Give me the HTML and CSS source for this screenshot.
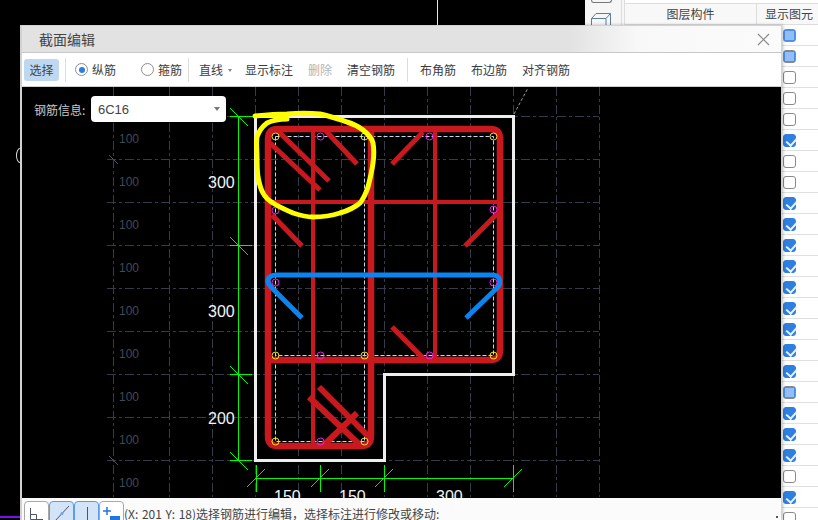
FILE: index.html
```html
<!DOCTYPE html>
<html lang="zh">
<head>
<meta charset="utf-8">
<title>截面编辑</title>
<link rel="stylesheet" href="styles.css">
</head>
<body>
<div class="desktop">
  <span class="bg-line"></span>
  <span class="bg-purple"></span>
  <span class="bg-arc"></span>

  <aside class="side">
    <div class="side-icons">
      <span class="side-stub"></span>
      <svg class="cube" width="22" height="26" viewBox="0 0 22 26"><path d="M1.5 7.5 L6 2.5 H20.5 V20 L16 25 H1.5 Z M1.5 7.5 H16 V25 M16 7.5 L20.5 2.5" /></svg>
    </div>
    <div class="side-table">
      <div class="thead"><span class="th-name">图层构件</span><span class="th-show">显示图元</span></div>
      <div class="row"><span class="cb part"></span></div>
      <div class="row"><span class="cb part"></span></div>
      <div class="row"><span class="cb"></span></div>
      <div class="row"><span class="cb"></span></div>
      <div class="row"><span class="cb"></span></div>
      <div class="row"><span class="cb on"></span></div>
      <div class="row"><span class="cb"></span></div>
      <div class="row"><span class="cb"></span></div>
      <div class="row"><span class="cb on"></span></div>
      <div class="row"><span class="cb on"></span></div>
      <div class="row"><span class="cb on"></span></div>
      <div class="row"><span class="cb on"></span></div>
      <div class="row"><span class="cb on"></span></div>
      <div class="row"><span class="cb on"></span></div>
      <div class="row"><span class="cb on"></span></div>
      <div class="row"><span class="cb on"></span></div>
      <div class="row"><span class="cb on"></span></div>
      <div class="row"><span class="cb part"></span></div>
      <div class="row"><span class="cb on"></span></div>
      <div class="row"><span class="cb on"></span></div>
      <div class="row"><span class="cb on"></span></div>
      <div class="row"><span class="cb"></span></div>
      <div class="row"><span class="cb on"></span></div>
      <div class="row"><span class="cb"></span></div>
    </div>
  </aside>

  <section class="dialog">
    <header class="title">
      <span class="title-text">截面编辑</span>
      <svg class="close" width="13" height="13" viewBox="0 0 13 13"><path d="M1 1 L12 12 M12 1 L1 12"/></svg>
    </header>

    <div class="toolbar">
      <button class="tool selected">选择</button>
      <span class="sep"></span>
      <span class="radio-item first"><span class="radio checked"></span>纵筋</span>
      <span class="radio-item second"><span class="radio"></span>箍筋</span>
      <span class="sep"></span>
      <span class="tool-drop">直线<span class="mini-caret"></span></span>
      <span class="tool-text">显示标注</span>
      <span class="tool-text off">删除</span>
      <span class="tool-text">清空钢筋</span>
      <span class="sep wide"></span>
      <span class="tool-text close-sep">布角筋</span>
      <span class="tool-text">布边筋</span>
      <span class="tool-text">对齐钢筋</span>
    </div>

    <div class="canvas">
      <svg class="drawing" width="759" height="411" viewBox="22 87 759 411">
        <path class="grid" d="M113.5 87V497 M169.5 87V497 M212.5 87V497 M255.5 87V497 M298.5 87V497 M341.5 87V497 M384.5 87V497 M427.5 87V497 M470.5 87V497 M513.5 87V497 M556.5 87V497 M599.5 87V497"/>
        <path class="grid" d="M107 116.5H599 M107 159.5H599 M107 202.5H599 M107 245.5H599 M107 288.5H599 M107 331.5H599 M107 374.5H599 M107 417.5H599 M107 460.5H599"/>
        <path class="grid-tick" d="M109 155L118 164 M109 456L118 465"/>
        <path class="stub" d="M514 114L528 88"/>
        <g class="hundreds">
          <text x="119" y="143">100</text><text x="119" y="186">100</text><text x="119" y="229">100</text>
          <text x="119" y="272">100</text><text x="119" y="315">100</text><text x="119" y="358">100</text>
          <text x="119" y="401">100</text><text x="119" y="444">100</text><text x="119" y="487">100</text>
        </g>

        <path class="outline" d="M255.5 116.5H513.5V374.5H384.5V460.5H255.5Z"/>

        <path class="dim" d="M238.5 116V460 M230 116.5H255 M230 245.5H252 M230 374.5H252 M230 460.5H252 M256.5 465V492 M320.5 465V492 M384.5 465V492 M513.5 465V492 M256 478.5H513"/>
        <path class="dim" d="M230 108L248 126 M230 237L248 255 M230 366L248 384 M230 452L248 470 M247 487L265 469 M311 487L329 469 M375 487L393 469 M504 487L522 469"/>
        <g class="dim-text">
          <text x="208" y="188">300</text><text x="208" y="317">300</text><text x="208" y="424">200</text>
          <text x="274" y="502">150</text><text x="339" y="502">150</text><text x="436" y="502">300</text>
        </g>

        <path class="guide" d="M275.5 136.5H493.5V355.5H275.5 M275.5 136.5V441.5H364.5 M364.5 136.5V441.5"/>

        <path class="rebar thin" d="M313 129V446 M435 129V360 M268 202H500"/>
        <path class="rebar thick" d="M278 129H490Q500 129 500 139V350Q500 360 490 360H371V436Q371 446 361 446H278Q268 446 268 436V139Q268 129 278 129Z M268 360H371 M371 129V360"/>
        <path class="rebar diag" d="M270 143L320 190 M277 130L329 181 M325 130L357 164 M423 132L392 164 M498 213L465 246 M272 215L302 246 M392 327L423 358"/>
        <path class="rebar diag-heavy" d="M319 387L370 438 M309 397L360 445 M357 413L323 446"/>
        <path class="stirrup" d="M302 318L271 287Q265 280 270 277Q272 275 277 275H492Q496 275 498 277Q502 281 498 287L466 318"/>

        <g class="bar-y">
          <circle cx="275.5" cy="136.5" r="3.5"/><circle cx="364.5" cy="136.5" r="3.5"/><circle cx="493.5" cy="136.5" r="3.5"/>
          <circle cx="275.5" cy="355.5" r="3.5"/><circle cx="364.5" cy="355.5" r="3.5"/><circle cx="493.5" cy="355.5" r="3.5"/>
          <circle cx="275.5" cy="441.5" r="3.5"/><circle cx="364.5" cy="441.5" r="3.5"/>
        </g>
        <g class="bar-m">
          <circle cx="320.5" cy="136.5" r="3.5"/><circle cx="429.5" cy="136.5" r="3.5"/>
          <circle cx="275.5" cy="210.5" r="3.5"/><circle cx="493.5" cy="209.5" r="3.5"/>
          <circle cx="275.5" cy="282.5" r="3.5"/><circle cx="493.5" cy="282.5" r="3.5"/>
          <circle cx="320.5" cy="355.5" r="3.5"/><circle cx="429.5" cy="355.5" r="3.5"/>
          <circle cx="320.5" cy="441.5" r="3.5"/>
        </g>

        <path class="marker" d="M255 116C265 115 277 114 287 114C298 113 310 113 320 114C330 116 338 119 347 122C354 124 359 127 363 130C368 134 372 138 373 143C374 149 374 156 373 163C372 171 370 179 368 187C366 193 364 198 360 203C354 208 347 211 340 213C331 216 322 217 313 217C306 217 299 215 293 213C286 210 279 207 273 203C268 200 265 197 263 193C260 188 259 182 258 177C257 170 257 163 257 157C257 150 256 143 257 137C259 131 263 126 267 123C273 120 280 119 287 119"/>
      </svg>

      <div class="rebar-info">
        <label class="info-label">钢筋信息:</label>
        <div class="combo"><span>6C16</span><span class="combo-caret"></span></div>
      </div>
    </div>

    <footer class="status">
      <div class="snap">
        <span class="snap-btn"><svg width="24" height="21" viewBox="0 0 24 21"><path d="M5.5 6V17.5H18 M5.5 12.5H11.5V17.5"/></svg></span>
        <span class="snap-btn active"><svg width="24" height="21" viewBox="0 0 24 21"><path d="M5 19L19 4"/><circle cx="12" cy="11.5" r="1.5"/></svg></span>
        <span class="snap-btn active"><svg width="24" height="21" viewBox="0 0 24 21"><path d="M12.5 5V20"/><circle cx="12.5" cy="20" r="1.5"/></svg></span>
        <span class="snap-btn"><svg class="plus" width="24" height="21" viewBox="0 0 24 21"><path d="M7 5V13 M3 9H11"/><rect x="10" y="14" width="10" height="6"/></svg></span>
      </div>
      <span class="status-text">(X: 201 Y: 18)选择钢筋进行编辑，选择标注进行修改或移动:</span>
      <span class="grip"></span>
    </footer>
  </section>
</div>
</body>
</html>
```
FILE: styles.css
```css
* { box-sizing: border-box; }
html, body { margin: 0; height: 100%; }
body { background: #000; overflow: hidden; font-family: "Noto Sans CJK SC", "Liberation Sans", sans-serif; }
.desktop { position: relative; width: 818px; height: 520px; overflow: hidden; background: #000; }

.bg-line { position: absolute; left: 437px; top: 0; width: 1px; height: 25px; background: #e8e8e8; }
.bg-purple { position: absolute; left: 0; top: 516px; width: 20px; height: 2px; background: #7a10f0; }
.bg-arc { position: absolute; left: 16px; top: 148px; width: 8px; height: 15px; border: 1px solid #ddd; border-radius: 50%; }

/* right side panel */
.side { position: absolute; left: 585px; top: 0; width: 233px; height: 520px; display: flex; background: #f6f6f6; }
.side-icons { width: 37px; padding-left: 5px; border-right: 1px solid #dcdcdc; display: flex; flex-direction: column; }
.side-stub { width: 21px; height: 3px; margin-left: 1px; border: 1px solid #777; border-top: 0; border-radius: 0 0 3px 3px; }
.cube { margin-top: 8px; }
.cube path { fill: none; stroke: #5a7d9c; stroke-width: 1; }
.side-table { flex: 1; margin-left: 2px; padding-top: 3px; background: #fff; border-left: 1px solid #ddd; }
.thead { display: flex; height: 22px; font-size: 12px; line-height: 20px; color: #444; background: #f8f8f8; border-top: 1px solid #ddd; border-bottom: 1px solid #ddd; }
.th-name { width: 132px; text-align: center; border-right: 1px solid #ddd; }
.th-show { flex: 1; padding-left: 8px; }
.row { height: 21px; padding-left: 158px; display: flex; align-items: center; border-bottom: 1px solid #e0e0e0; }
.cb { position: relative; display: block; width: 13px; height: 13px; border: 1px solid #8a8a8a; border-radius: 3px; background: #fff; }
.cb.on { border-color: #2f7fe0; background: #2f7fe0; }
.cb.on::after { content: ""; position: absolute; left: 3.5px; top: 1px; width: 5px; height: 8px; border: solid #e8f2fd; border-width: 0 2px 2px 0; transform: rotate(42deg); }
.cb.part::after { content: ""; position: absolute; left: 1px; top: 1px; width: 9px; height: 9px; background: #90bff7; outline: 1px solid #4a90e8; }

/* dialog */
.dialog { position: absolute; left: 20px; top: 25px; width: 762px; height: 495px; display: flex; flex-direction: column; background: #e4e4e4; box-shadow: 1px 0 3px rgba(0,0,0,.25); border: solid #d2d2d2; border-width: 1px 1px 0 2px; }
.title { height: 27px; flex: none; display: flex; align-items: center; justify-content: space-between; padding: 0 11px 0 17px; background: linear-gradient(90deg, #e2e2e2 0, #e2e2e2 72%, #f8f8f8 81%, #fbfbfb 100%); border-bottom: 1px solid #c8c8c8; }
.title-text { font-size: 14px; color: #454545; }
.close path { fill: none; stroke: #8a8a8a; stroke-width: 1.2; }

.toolbar { height: 34px; flex: none; display: flex; align-items: center; padding: 0 0 0 2px; background: #fff; border-bottom: 1px solid #cfcfcf; font-size: 12px; color: #3c3c3c; }
.tool { width: 35px; height: 22px; padding: 0; border: 0; border-radius: 3px; font: inherit; color: #444; }
.tool.selected { background: #bfd8f2; }
.sep { width: 1px; height: 24px; margin-left: 6px; background: #dcdcdc; }
.sep.wide { margin-left: 12px; }
.radio-item { display: flex; align-items: center; gap: 4px; }
.radio-item.first { margin-left: 9px; }
.radio-item.second { margin-left: 25px; }
.radio { position: relative; display: block; width: 13px; height: 13px; border: 1px solid #8e8e8e; border-radius: 50%; background: #fff; }
.radio.checked::after { content: ""; position: absolute; left: 2.5px; top: 2.5px; width: 6px; height: 6px; border-radius: 50%; background: #2a7de1; }
.tool-drop { position: relative; margin-left: 10px; width: 31px; }
.mini-caret { position: absolute; left: 29px; top: 8px; border: solid transparent; border-width: 3px 2.5px 0; border-top-color: #8a8a8a; }
.tool-text { margin-left: 15px; }
.tool-text.close-sep { margin-left: 12px; }
.tool-text.off { color: #b4b4b4; }

.canvas { position: relative; flex: none; height: 411px; background: #000; overflow: hidden; }
.drawing { display: block; }
.grid { fill: none; stroke: #333c4a; stroke-width: 1; stroke-dasharray: 9 3 3 3; }
.grid-tick { fill: none; stroke: #4a5362; stroke-width: 1; }
.stub { fill: none; stroke: #9a9a9a; stroke-width: 1; stroke-dasharray: 3 2; }
.hundreds text { font: 12px "Liberation Sans", sans-serif; fill: #414a57; }
.outline { fill: none; stroke: #eeeeee; stroke-width: 3; }
.dim { fill: none; stroke: #00f800; stroke-width: 1; }
.dim-text text { font: 16px "Liberation Sans", sans-serif; fill: #f4f4f4; }
.guide { fill: none; stroke: #c4d8ee; stroke-width: 1; stroke-dasharray: 4 2; }
.rebar { fill: none; stroke: #c9191f; }
.rebar.thin { stroke-width: 4; }
.rebar.thick { stroke-width: 6.5; }
.rebar.diag { stroke-width: 5; }
.rebar.diag-heavy { stroke-width: 6; }
.stirrup { fill: none; stroke: #0a84f0; stroke-width: 5; }
.bar-y circle { fill: none; stroke: #f2e02c; stroke-width: 1; }
.bar-m circle { fill: none; stroke: #ee22ee; stroke-width: 1; }
.marker { fill: none; stroke: #ffff00; stroke-width: 5; stroke-linecap: round; stroke-linejoin: round; }

.rebar-info { position: absolute; left: 12px; top: 9px; display: flex; align-items: center; gap: 6px; }
.info-label { width: 51px; font-size: 12px; color: #c8c8c8; white-space: nowrap; }
.combo { position: relative; width: 135px; height: 26px; padding-left: 7px; display: flex; align-items: center; justify-content: space-between; background: #fff; border-radius: 4px; font: 13px "Liberation Sans", sans-serif; color: #444; }
.combo-caret { margin-right: 6px; border: solid transparent; border-width: 4px 3px 0; border-top-color: #777; }

.status { flex: 1; display: flex; align-items: flex-start; background: #fbfbfb; padding: 3px 0 0 2px; overflow: hidden; position: relative; }
.snap { display: flex; flex: none; }
.snap-btn { display: block; width: 25px; height: 24px; border: 1px solid #a8a8a8; border-radius: 4px 4px 0 0; background: #fff; }
.snap-btn.active { border-color: #5c9ce6; background: #d4e4f8; }
.snap-btn svg { display: block; }
.snap-btn path { fill: none; stroke: #4c5660; stroke-width: 1; }
.snap-btn circle { fill: #6fa6e4; }
.snap-btn .plus path { stroke: #1f78e0; stroke-width: 1.5; }
.snap-btn .plus rect { fill: #1f78e0; }
.status-text { font-size: 12px; line-height: 22px; margin-top: 2px; color: #444; white-space: nowrap; word-spacing: 1px; }
.grip { position: absolute; right: 3px; bottom: 2px; width: 2px; height: 2px; background: #556; }
```
